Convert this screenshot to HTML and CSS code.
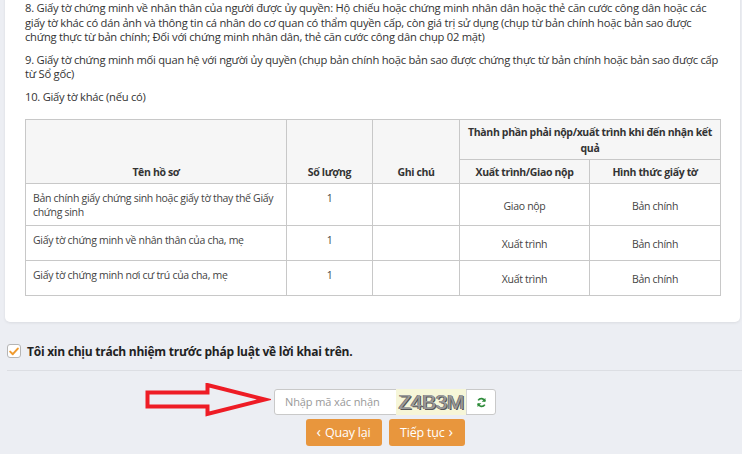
FILE: index.html
```html
<!DOCTYPE html>
<html lang="vi">
<head>
<meta charset="utf-8">
<link rel="stylesheet" href="styles.css">
</head>
<body>
<div class="card">
  <p>8. Giấy tờ chứng minh về nhân thân của người được ủy quyền: Hộ chiếu hoặc chứng minh nhân dân hoặc thẻ căn cước công dân hoặc các giấy tờ khác có dán ảnh và thông tin cá nhân do cơ quan có thẩm quyền cấp, còn giá trị sử dụng (chụp từ bản chính hoặc bản sao được chứng thực từ bản chính; Đối với chứng minh nhân dân, thẻ căn cước công dân chụp 02 mặt)</p>
  <p>9. Giấy tờ chứng minh mối quan hệ với người ủy quyền (chụp bản chính hoặc bản sao được chứng thực từ bản chính hoặc bản sao được cấp từ Sổ gốc)</p>
  <p>10. Giấy tờ khác (nếu có)</p>
  <table class="docs">
    <colgroup>
      <col class="w-name"><col class="w-qty"><col class="w-note"><col class="w-type"><col class="w-form">
    </colgroup>
    <thead>
      <tr class="h1">
        <th rowspan="2">Tên hồ sơ</th>
        <th rowspan="2">Số lượng</th>
        <th rowspan="2">Ghi chú</th>
        <th colspan="2" class="top">Thành phần phải nộp/xuất trình khi đến nhận kết quả</th>
      </tr>
      <tr class="h2">
        <th>Xuất trình/Giao nộp</th>
        <th>Hình thức giấy tờ</th>
      </tr>
    </thead>
    <tbody>
      <tr class="r1">
        <td class="name">Bản chính giấy chứng sinh hoặc giấy tờ thay thế Giấy chứng sinh</td>
        <td class="ctr">1</td>
        <td></td>
        <td class="mid">Giao nộp</td>
        <td class="mid">Bản chính</td>
      </tr>
      <tr class="r2">
        <td class="name">Giấy tờ chứng minh về nhân thân của cha, mẹ</td>
        <td class="ctr">1</td>
        <td></td>
        <td class="mid">Xuất trình</td>
        <td class="mid">Bản chính</td>
      </tr>
      <tr class="r2">
        <td class="name">Giấy tờ chứng minh nơi cư trú của cha, mẹ</td>
        <td class="ctr">1</td>
        <td></td>
        <td class="mid">Xuất trình</td>
        <td class="mid">Bản chính</td>
      </tr>
    </tbody>
  </table>
</div>

<label class="agree">
  <span class="check">
    <svg width="10" height="9" viewBox="0 0 10 9"><path d="M1.2 4.6 L3.8 7.2 L8.8 1.6" fill="none" stroke="#ef9a2e" stroke-width="2" stroke-linecap="round" stroke-linejoin="round"/></svg>
  </span>
  <span class="agree-text">Tôi xin chịu trách nhiệm trước pháp luật về lời khai trên.</span>
</label>
<div class="sep"></div>

<div class="verify">
  <div class="captcha-group">
    <svg class="arrow" width="128" height="34" viewBox="0 0 128 34">
      <path d="M4.5 9.5 H64.5 V2 L122 16.5 L64.5 31 V23.5 H4.5 Z" fill="none" stroke="#ee1c25" stroke-width="4" stroke-linejoin="miter" stroke-miterlimit="10"/>
    </svg>
    <span class="captcha-input">Nhập mã xác nhận</span>
    <span class="captcha-img">Z4B3M</span>
    <span class="refresh">
      <svg width="11" height="11" viewBox="0 0 16 16">
        <path d="M13.2 6.2 A5.5 5.5 0 0 0 3.2 5" fill="none" stroke="#2e8b3a" stroke-width="2.4"/>
        <path d="M13.8 1.5 V7 H8.3 Z" fill="#2e8b3a"/>
        <path d="M2.8 9.8 A5.5 5.5 0 0 0 12.8 11" fill="none" stroke="#2e8b3a" stroke-width="2.4"/>
        <path d="M2.2 14.5 V9 H7.7 Z" fill="#2e8b3a"/>
      </svg>
    </span>
  </div>
  <div class="actions">
    <span class="btn"><span class="chev">‹</span> Quay lại</span>
    <span class="btn">Tiếp tục <span class="chev">›</span></span>
  </div>
</div>
</body>
</html>
```

FILE: styles.css
```css
html, body {
  margin: 0;
  padding: 0;
}
body {
  background: #eceef3;
  font-family: "Open Sans", "Noto Sans", sans-serif;
  color: #333;
  width: 742px;
  height: 454px;
  overflow: hidden;
}
.card {
  background: #fff;
  margin: -10px 2px 0 5px;
  padding: 11px 20px 26px;
  border-radius: 0 0 5px 5px;
  box-shadow: 0 1px 3px rgba(0, 0, 0, 0.08);
}
.card p {
  margin: 0 0 8px;
  font-size: 11.2px;
  letter-spacing: -0.25px;
  line-height: 14.5px;
}
.card p:last-of-type {
  margin-bottom: 15px;
}
.docs {
  width: 695px;
  border-collapse: collapse;
  table-layout: fixed;
  border: 1px solid #b8b8b8;
}
.w-name { width: 261px; }
.w-qty { width: 86px; }
.w-note { width: 87px; }
.w-type { width: 130px; }
.w-form { width: 131px; }
.docs th, .docs td {
  border: 1px solid #c8c8c8;
}
.docs th {
  background: #f6f6f6;
  font-weight: 700;
  font-size: 10.5px;
  letter-spacing: -0.35px;
  line-height: 16px;
  padding: 4px 6px 3px;
  color: #333;
  text-align: center;
  vertical-align: bottom;
}
.docs .h1 { height: 39px; }
.docs .h2 { height: 23px; }
.docs td {
  font-size: 10.5px;
  letter-spacing: -0.3px;
  line-height: 14px;
  padding: 7px 4px 3px 7px;
  vertical-align: top;
  color: #444;
}
.docs td.ctr { text-align: center; padding-right: 7px; }
.docs td.mid { text-align: center; vertical-align: middle; padding-right: 7px; padding-top: 5px; }
.docs .r1 { height: 42px; }
.docs .r2 { height: 35px; }

.agree {
  display: flex;
  align-items: center;
  gap: 6px;
  margin: 22px 0 0 7px;
  height: 14px;
}
.check {
  width: 12px;
  height: 12px;
  border: 1px solid #b5b5b5;
  border-radius: 3px;
  background: #fff;
  display: flex;
  align-items: center;
  justify-content: center;
}
.agree-text {
  font-weight: 700;
  font-size: 12px;
  letter-spacing: -0.25px;
  color: #222;
}
.sep {
  margin: 12px 0 0 7px;
  border-top: 1px solid #dcdee3;
}
.verify {
  display: flex;
  flex-direction: column;
  align-items: center;
  padding-left: 28px;
  margin-top: 18px;
}
.captcha-group {
  position: relative;
  display: flex;
  width: 220px;
  height: 24px;
  border: 1px solid #c9c9c9;
  border-radius: 3px;
  background: #fff;
}
.arrow {
  position: absolute;
  left: -132px;
  top: -7px;
}
.captcha-input {
  width: 112px;
  padding-left: 10px;
  font-size: 11px;
  letter-spacing: -0.1px;
  color: #999;
  line-height: 24px;
}
.captcha-img {
  width: 70px;
  background: #f6f6d8;
  font-family: "Liberation Sans", Arial, sans-serif;
  font-size: 21px;
  line-height: 26px;
  height: 26px;
  margin-top: -1px;
  color: #9a9a9a;
  text-shadow: 1px 1px 0 #555, -1px 0 0 #777;
  text-align: center;
  letter-spacing: -0.5px;
}
.refresh {
  width: 28px;
  border-left: 1px solid #d6d6d6;
  display: flex;
  align-items: center;
  justify-content: center;
}
.actions {
  display: flex;
  gap: 7px;
  margin-top: 4px;
}
.btn {
  width: 76px;
  height: 27px;
  background: #e8963d;
  border-radius: 3px;
  color: #fff;
  font-size: 12.5px;
  letter-spacing: -0.2px;
  display: flex;
  align-items: center;
  justify-content: center;
  gap: 4px;
}
.chev {
  font-size: 15px;
  line-height: 15px;
  margin-top: -2px;
}
```
